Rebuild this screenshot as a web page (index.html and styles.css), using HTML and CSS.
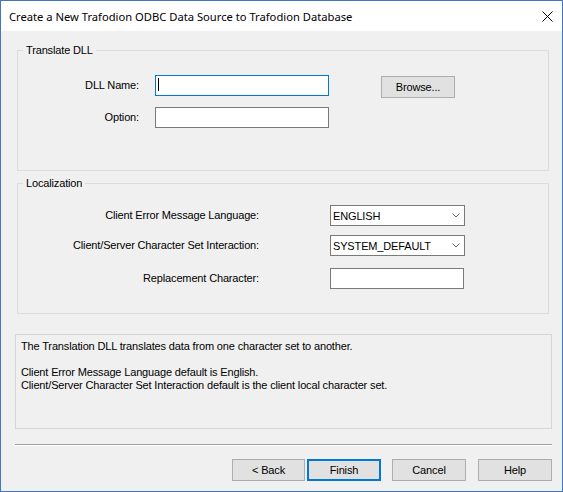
FILE: index.html
```html
<!DOCTYPE html>
<html lang="en">
<head>
<meta charset="utf-8">
<title>Create a New Trafodion ODBC Data Source</title>
<link rel="stylesheet" href="styles.css">
</head>
<body>
<div class="window">
  <div class="titlebar">
    <span class="title">Create a New Trafodion ODBC Data Source to Trafodion Database</span>
    <svg class="close" width="11" height="11" viewBox="0 0 11 11" aria-hidden="true">
      <path d="M0.5 0.5 L10.5 10.5 M10.5 0.5 L0.5 10.5" stroke="#000" stroke-width="1" fill="none"/>
    </svg>
  </div>
  <div class="content">
    <fieldset class="group group-dll">
      <legend>Translate DLL</legend>
      <div class="row">
        <span class="lbl lbl-dll">DLL Name:</span>
        <div class="textbox textbox-dll focused"><span class="caret"></span></div>
        <button class="btn btn-browse">Browse...</button>
      </div>
      <div class="row row-option">
        <span class="lbl lbl-dll">Option:</span>
        <div class="textbox textbox-dll"></div>
      </div>
    </fieldset>

    <fieldset class="group group-loc">
      <legend>Localization</legend>
      <div class="row">
        <span class="lbl lbl-loc">Client Error Message Language:</span>
        <div class="combo"><span>ENGLISH</span>
          <svg class="chev" width="8" height="5" viewBox="0 0 8 5" aria-hidden="true"><path d="M0.5 0.5 L4 4 L7.5 0.5" stroke="#606060" stroke-width="1" fill="none"/></svg>
        </div>
      </div>
      <div class="row row-charset">
        <span class="lbl lbl-loc">Client/Server Character Set Interaction:</span>
        <div class="combo"><span>SYSTEM_DEFAULT</span>
          <svg class="chev" width="8" height="5" viewBox="0 0 8 5" aria-hidden="true"><path d="M0.5 0.5 L4 4 L7.5 0.5" stroke="#606060" stroke-width="1" fill="none"/></svg>
        </div>
      </div>
      <div class="row row-replace">
        <span class="lbl lbl-loc">Replacement Character:</span>
        <div class="textbox textbox-replace"></div>
      </div>
    </fieldset>

    <div class="info">
      <p>The Translation DLL translates data from one character set to another.</p>
      <p class="info-second">Client Error Message Language default is English.<br>Client/Server Character Set Interaction default is the client local character set.</p>
    </div>

    <div class="separator"></div>

    <div class="buttons">
      <button class="btn btn-back">&lt; Back</button>
      <button class="btn btn-finish">Finish</button>
      <button class="btn btn-cancel">Cancel</button>
      <button class="btn btn-help">Help</button>
    </div>
  </div>
</div>
</body>
</html>
```

FILE: styles.css
```css
html, body {
  margin: 0;
  padding: 0;
  background: #f0f0f0;
}

.window {
  width: 563px;
  height: 492px;
  box-sizing: border-box;
  border: 1px solid #3f77c0;
  background: #f0f0f0;
  display: flex;
  flex-direction: column;
  font-family: "Liberation Sans", Arial, sans-serif;
  font-size: 11px;
  letter-spacing: -0.15px;
  color: #000;
}

.titlebar {
  height: 30px;
  flex: none;
  background: #fff;
  display: flex;
  align-items: center;
  padding: 0 9px 0 8px;
}

.title {
  flex: 1;
  font-family: "Noto Sans", "Open Sans", sans-serif;
  font-size: 11.2px;
  letter-spacing: 0;
  color: #000;
  white-space: nowrap;
}

.close {
  display: block;
  flex: none;
}

.content {
  padding: 13px 10px 0 14px;
  display: flex;
  flex-direction: column;
}

.group {
  margin: 0 3px 0 2px;
  border: 1px solid #dcdcdc;
  min-inline-size: 0;
}

.group legend {
  margin-left: 5px;
  padding: 0 3px;
  line-height: 13px;
  font-size: 11px;
}

.group-dll {
  padding: 18px 0 42px 0;
}

.group-loc {
  margin-top: 6px;
  padding: 15px 0 24px 0;
}

.row {
  display: flex;
  align-items: flex-start;
  height: 21px;
}

.row-option {
  margin-top: 11px;
}

.row-charset {
  margin-top: 9px;
}

.row-replace {
  margin-top: 12px;
}

.lbl {
  line-height: 21px;
  text-align: right;
  white-space: nowrap;
  flex: none;
}

.lbl-dll {
  width: 121px;
  margin-right: 16px;
}

.lbl-loc {
  width: 241px;
  margin-right: 71px;
}

.textbox {
  box-sizing: border-box;
  height: 21px;
  background: #fff;
  border: 1px solid #7a7a7a;
  flex: none;
}

.textbox.focused {
  border-color: #0078d7;
}

.textbox-dll {
  width: 174px;
}

.textbox-replace {
  width: 134px;
}

.caret {
  display: block;
  width: 1px;
  height: 13px;
  margin: 2px 0 0 2px;
  background: #000;
}

.combo {
  box-sizing: border-box;
  width: 135px;
  height: 21px;
  background: #fff;
  border: 1px solid #7a7a7a;
  display: flex;
  align-items: center;
  justify-content: space-between;
  padding: 0 4px 0 2px;
  flex: none;
  white-space: nowrap;
}

.chev {
  display: block;
  flex: none;
}

.btn {
  box-sizing: border-box;
  height: 22px;
  width: 74px;
  padding: 0;
  margin: 0;
  background: #e1e1e1;
  border: 1px solid #adadad;
  font-family: inherit;
  font-size: 11px;
  letter-spacing: -0.15px;
  color: #000;
  flex: none;
}

.btn-browse {
  margin-left: 52px;
  margin-top: 1px;
}

.info {
  margin-top: 20px;
  box-sizing: border-box;
  height: 95px;
  border: 1px solid #d5d5d5;
  padding: 5px 5px;
  line-height: 13px;
}

.info p {
  margin: 0;
}

.info .info-second {
  margin-top: 13px;
}

.separator {
  margin-top: 15px;
  height: 0;
  border-top: 1px solid #a0a0a0;
  border-bottom: 1px solid #ffffff;
}

.buttons {
  margin-top: 13px;
  display: flex;
  justify-content: flex-end;
}

.btn-back {
  width: 73px;
}

.btn-finish {
  margin-left: 2px;
  border: 2px solid #0078d7;
}

.btn-cancel {
  margin-left: 11px;
}

.btn-help {
  margin-left: 12px;
}
```
